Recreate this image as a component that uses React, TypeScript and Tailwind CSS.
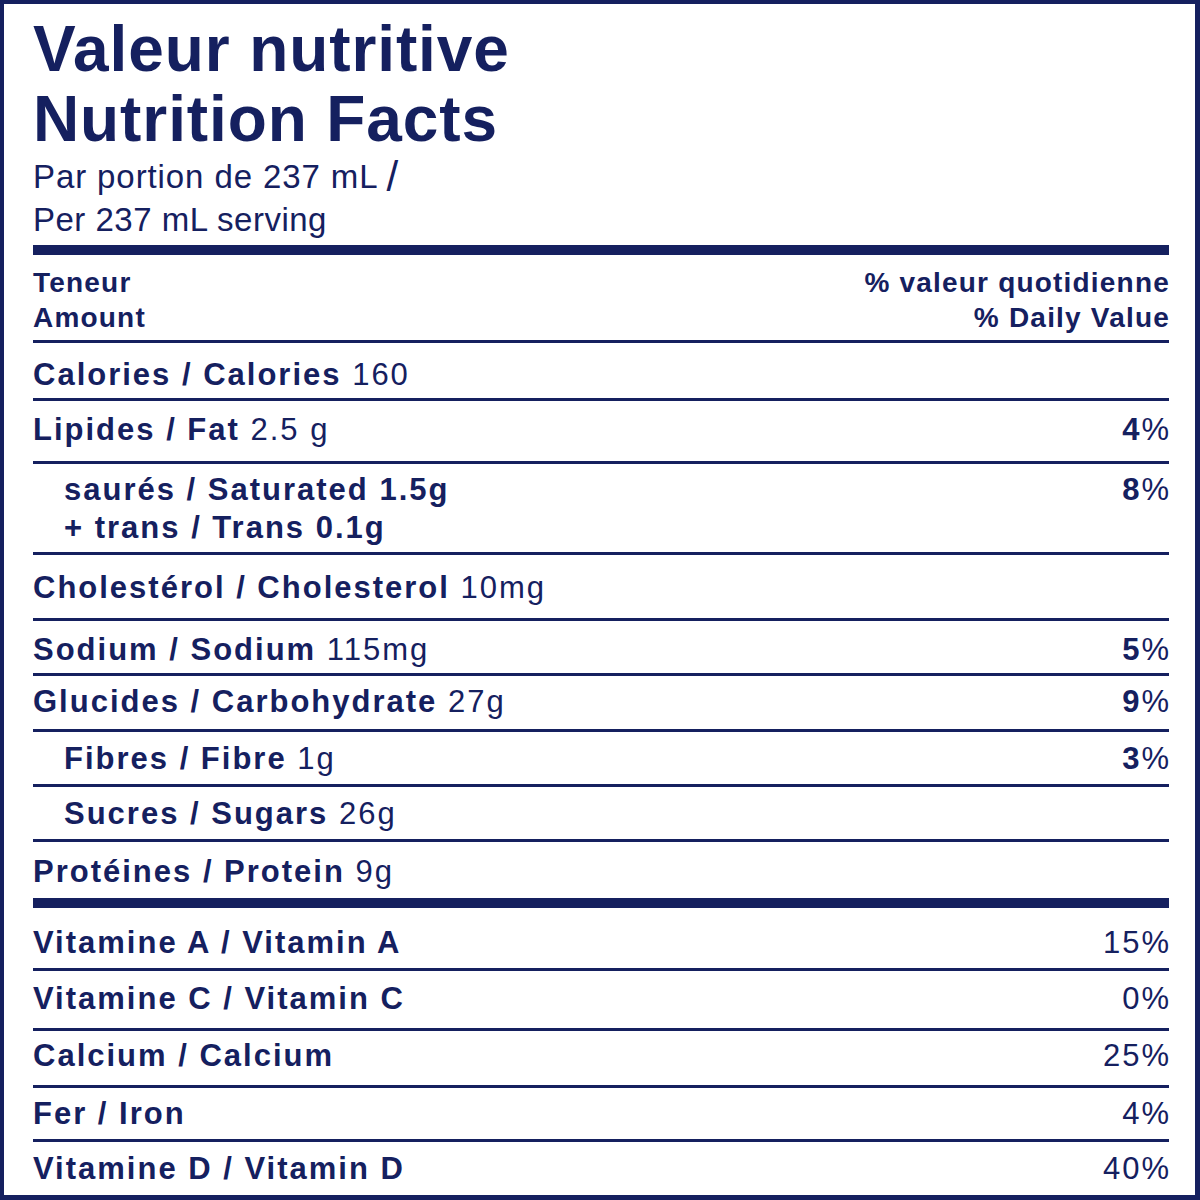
const rows = [
  { fr: "Calories / Calories", val: "160", box: "h-[58px] pt-[16px] border-b-[3px]" },
  { fr: "Lipides / Fat", val: "2.5 g", pct: "4", box: "h-[63px] pt-[13px] border-b-[3px]" },
  { fr: "Cholestérol / Cholesterol", val: "10mg", box: "h-[66px] pt-[17px] border-b-[3px]" },
  { fr: "Sodium / Sodium", val: "115mg", pct: "5", box: "h-[55px] pt-[13px] border-b-[3px]" },
  { fr: "Glucides / Carbohydrate", val: "27g", pct: "9", box: "h-[56px] pt-[10px] border-b-[3px]" },
  { fr: "Fibres / Fibre", val: "1g", pct: "3", indent: true, box: "h-[55px] pt-[11px] border-b-[3px]" },
  { fr: "Sucres / Sugars", val: "26g", indent: true, box: "h-[55px] pt-[11px] border-b-[3px]" },
  { fr: "Protéines / Protein", val: "9g", box: "h-[56px] pt-[14px]" },
]

const vitamins = [
  { fr: "Vitamine A / Vitamin A", pct: "15%", box: "h-[63px] pt-[19px] border-b-[3px]" },
  { fr: "Vitamine C / Vitamin C", pct: "0%", box: "h-[60px] pt-[12px] border-b-[3px]" },
  { fr: "Calcium / Calcium", pct: "25%", box: "h-[57px] pt-[9px] border-b-[3px]" },
  { fr: "Fer / Iron", pct: "4%", box: "h-[54px] pt-[10px] border-b-[3px]" },
  { fr: "Vitamine D / Vitamin D", pct: "40%", box: "h-[53px] pt-[11px]" },
]

function Pct({ n }: { n: string }) {
  return (
    <span className="-mr-[2px]">
      <span className="font-bold">{n}</span>%
    </span>
  )
}

export default function App() {
  return (
    <div className="w-[1200px] h-[1200px] bg-white text-[#15205f] font-['Liberation_Sans',Arial,sans-serif] border-t-4 border-l-4 border-r-[5px] border-b-[5px] border-[#15205f] pl-[29px] pr-[26px] pt-[10px] flex flex-col">
      {/* title */}
      <div className="text-[64px] leading-[70px] font-bold tracking-[0.9px]">
        <div>Valeur nutritive</div>
        <div>Nutrition Facts</div>
      </div>
      <div className="text-[33px] leading-[43px] mt-[1px]">
        <div className="tracking-[0.9px]">
          Par portion de 237 mL
          <span className="inline-block text-[42px] leading-[43px] font-light align-top ml-[8px]">/</span>
        </div>
        <div className="tracking-[0.5px]">Per 237 mL serving</div>
      </div>

      <div className="h-[10px] bg-[#15205f] mt-[4px]" />

      {/* column heads */}
      <div className="h-[88px] pt-[10px] border-b-[3px] border-[#15205f] flex justify-between text-[28px] leading-[35px] font-bold tracking-[1.2px]">
        <div>
          <div>Teneur</div>
          <div>Amount</div>
        </div>
        <div className="text-right -mr-[1px]">
          <div>% valeur quotidienne</div>
          <div>% Daily Value</div>
        </div>
      </div>

      <div className="text-[31px] leading-[31px] tracking-[2px]">
        {rows.slice(0, 2).map((r) => (
          <div key={r.fr} className={`${r.box} border-[#15205f] flex justify-between`}>
            <div className={r.indent ? "pl-[31px]" : ""}>
              <span className="font-bold">{r.fr}</span> {r.val}
            </div>
            {r.pct && <Pct n={r.pct} />}
          </div>
        ))}

        <div className="h-[91px] pt-[7px] border-b-[3px] border-[#15205f] flex justify-between leading-[38px]">
          <div className="pl-[31px] font-bold">
            <div>saurés / Saturated 1.5g</div>
            <div>+ trans / Trans 0.1g</div>
          </div>
          <div>
            <Pct n="8" />
          </div>
        </div>

        {rows.slice(2).map((r) => (
          <div key={r.fr} className={`${r.box} border-[#15205f] flex justify-between`}>
            <div className={r.indent ? "pl-[31px]" : ""}>
              <span className="font-bold">{r.fr}</span> {r.val}
            </div>
            {r.pct && <Pct n={r.pct} />}
          </div>
        ))}

        <div className="h-[10px] bg-[#15205f]" />

        {vitamins.map((v) => (
          <div key={v.fr} className={`${v.box} border-[#15205f] flex justify-between`}>
            <span className="font-bold">{v.fr}</span>
            <span className="-mr-[2px]">{v.pct}</span>
          </div>
        ))}
      </div>
    </div>
  )
}
